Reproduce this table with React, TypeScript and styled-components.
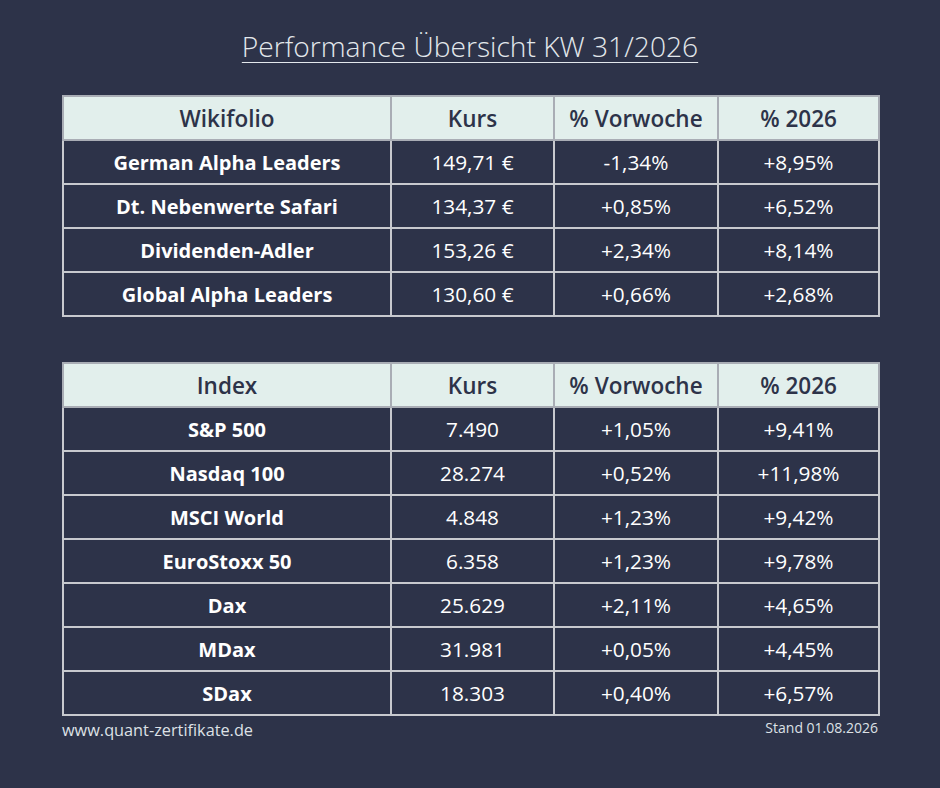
import styled, { createGlobalStyle } from 'styled-components'

const GlobalStyle = createGlobalStyle`
  html, body {
    margin: 0;
    padding: 0;
    background: #2d3349;
  }
`

const Page = styled.div`
  width: 940px;
  height: 788px;
  box-sizing: border-box;
  padding: 27px 62px 0;
  background: #2d3349;
  font-family: "Open Sans", sans-serif;
  display: flex;
  flex-direction: column;
`

const Title = styled.h1`
  margin: 0 0 30px;
  text-align: center;
  font-family: "Open Sans", sans-serif;
  font-weight: 300;
  font-size: 28.2px;
  line-height: 38px;
  color: #e3e8ec;
  text-decoration: underline;
  text-decoration-thickness: 1px;
  text-underline-offset: 5px;
`

const Table = styled.table<{ gap?: number }>`
  width: 816px;
  border-collapse: collapse;
  table-layout: fixed;
  margin-bottom: ${props => props.gap ?? 0}px;
`

const HeadCell = styled.th`
  height: 42px;
  padding: 0;
  background: #e2efec;
  color: #2d3349;
  font-size: 22.5px;
  font-weight: 600;
  text-align: center;
  border: 2px solid #a9adb5;
`

const Cell = styled.td<{ name?: boolean }>`
  height: 42px;
  padding: 0;
  color: #ffffff;
  font-size: ${props => (props.name ? 20 : 20.8)}px;
  font-weight: ${props => (props.name ? 700 : 400)};
  text-align: center;
  border: 2px solid #c7c9ce;
`

const Footer = styled.div`
  display: flex;
  justify-content: space-between;
  align-items: flex-start;
  width: 816px;
  margin-top: 3px;
  font-family: "Open Sans", sans-serif;
  color: #dde1e6;
`

const Site = styled.span`
  font-size: 16.3px;
  line-height: 22px;
`

const Stand = styled.span`
  font-size: 14px;
  line-height: 18px;
`

const widths = [328, 163, 164, 161]

const wikifolios = [
  ['German Alpha Leaders', '149,71 €', '-1,34%', '+8,95%'],
  ['Dt. Nebenwerte Safari', '134,37 €', '+0,85%', '+6,52%'],
  ['Dividenden-Adler', '153,26 €', '+2,34%', '+8,14%'],
  ['Global Alpha Leaders', '130,60 €', '+0,66%', '+2,68%'],
]

const indices = [
  ['S&P 500', '7.490', '+1,05%', '+9,41%'],
  ['Nasdaq 100', '28.274', '+0,52%', '+11,98%'],
  ['MSCI World', '4.848', '+1,23%', '+9,42%'],
  ['EuroStoxx 50', '6.358', '+1,23%', '+9,78%'],
  ['Dax', '25.629', '+2,11%', '+4,65%'],
  ['MDax', '31.981', '+0,05%', '+4,45%'],
  ['SDax', '18.303', '+0,40%', '+6,57%'],
]

function PerfTable({ label, rows, gap }: { label: string; rows: string[][]; gap?: number }) {
  return (
    <Table gap={gap}>
      <colgroup>
        {widths.map((w, i) => (
          <col key={i} style={{ width: w }} />
        ))}
      </colgroup>
      <thead>
        <tr>
          <HeadCell>{label}</HeadCell>
          <HeadCell>Kurs</HeadCell>
          <HeadCell>% Vorwoche</HeadCell>
          <HeadCell>% 2026</HeadCell>
        </tr>
      </thead>
      <tbody>
        {rows.map(r => (
          <tr key={r[0]}>
            {r.map((v, i) => (
              <Cell key={i} name={i === 0}>
                {v}
              </Cell>
            ))}
          </tr>
        ))}
      </tbody>
    </Table>
  )
}

export default function App() {
  return (
    <>
      <GlobalStyle />
      <Page>
        <Title>Performance Übersicht KW 31/2026</Title>
        <PerfTable label="Wikifolio" rows={wikifolios} gap={45} />
        <PerfTable label="Index" rows={indices} />
        <Footer>
          <Site>www.quant-zertifikate.de</Site>
          <Stand>Stand 01.08.2026</Stand>
        </Footer>
      </Page>
    </>
  )
}
